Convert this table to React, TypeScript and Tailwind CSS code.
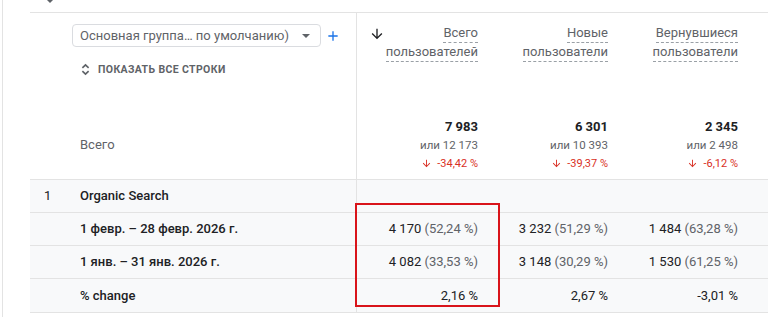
import type { JSX } from "react";

type Metric = { top: string; bottom: string; total: string; prev: string; change: string };

const metrics: Metric[] = [
  { top: "Всего", bottom: "пользователей", total: "7 983", prev: "или 12 173", change: "-34,42 %" },
  { top: "Новые", bottom: "пользователи", total: "6 301", prev: "или 10 393", change: "-39,37 %" },
  { top: "Вернувшиеся", bottom: "пользователи", total: "2 345", prev: "или 2 498", change: "-6,12 %" },
];

type Row = { num?: string; label: string; cells: { value: string; share?: string }[] };

const rows: Row[] = [
  { num: "1", label: "Organic Search", cells: [] },
  {
    label: "1 февр. – 28 февр. 2026 г.",
    cells: [
      { value: "4 170", share: "(52,24 %)" },
      { value: "3 232", share: "(51,29 %)" },
      { value: "1 484", share: "(63,28 %)" },
    ],
  },
  {
    label: "1 янв. – 31 янв. 2026 г.",
    cells: [
      { value: "4 082", share: "(33,53 %)" },
      { value: "3 148", share: "(30,29 %)" },
      { value: "1 530", share: "(61,25 %)" },
    ],
  },
  { label: "% change", cells: [{ value: "2,16 %" }, { value: "2,67 %" }, { value: "-3,01 %" }] },
];

const colClass = ["w-[131px]", "w-[130px]", "w-[130px]"];

const DownArrow = ({ className }: { className: string }): JSX.Element => (
  <svg viewBox="0 0 24 24" className={className} fill="currentColor" aria-hidden>
    <path d="M20 12l-1.41-1.41L13 16.17V4h-2v12.17l-5.58-5.59L4 12l8 8 8-8z" />
  </svg>
);

const ExpandIcon = (): JSX.Element => (
  <svg viewBox="0 0 24 24" className="h-[15px] w-[15px] text-[#5f6368]" fill="none" stroke="currentColor" strokeWidth="2.6" aria-hidden>
    <path d="M7 9.5l5-5 5 5M7 14.5l5 5 5-5" />
  </svg>
);

export default function App(): JSX.Element {
  return (
    <div
      className="relative h-[317px] w-[768px] overflow-hidden bg-white pl-[2px] text-[#202124]"
      style={{ fontFamily: "Roboto, 'Noto Sans', sans-serif" }}
    >
      <div className="h-full border-l border-[#e3e3e3] pl-[27px]">
        {/* cut-off icon above the table */}
        <div className="relative h-[12px]">
          <svg viewBox="0 0 8 4" className="absolute left-[17px] top-0 h-[3px] w-[6px] text-[#5f6368]" fill="currentColor" aria-hidden>
            <path d="M0 0h8L4 4z" />
          </svg>
        </div>

        <div className="border-t border-[#e3e3e3]">
          {/* header block */}
          <div className="flex h-[167px] border-b border-[#e3e3e3]">
            <div className="flex w-[327px] shrink-0 flex-col border-r border-[#e3e3e3] pl-[42px] pt-[11px]">
              <div className="flex items-center">
                <div className="flex h-[23px] w-[249px] items-center rounded-[4px] border border-[#dadce0] pl-[7px] pr-[10px] text-[13px] text-[#5f6368]">
                  <span className="flex-1 whitespace-nowrap">Основная группа… по умолчанию)</span>
                  <svg viewBox="0 0 10 5" className="h-[4px] w-[8px]" fill="#5f6368" aria-hidden>
                    <path d="M0 0h10L5 5z" />
                  </svg>
                </div>
                <svg viewBox="0 0 24 24" className="ml-[4px] h-[16px] w-[16px]" fill="#1a73e8" aria-hidden>
                  <path d="M19 13h-6v6h-2v-6H5v-2h6V5h2v6h6v2z" />
                </svg>
              </div>
              <div className="mt-[15px] flex items-center gap-[5px] pl-[6px] text-[10.5px] font-bold tracking-[0.035em] text-[#5f6368]">
                <ExpandIcon />
                <span>ПОКАЗАТЬ ВСЕ СТРОКИ</span>
              </div>
              <div className="mt-[57px] pl-[8px] text-[13px] text-[#5f6368]">Всего</div>
            </div>

            {metrics.map((m, i) => (
              <div key={m.top} className={`relative flex shrink-0 flex-col items-end pr-[10px] ${colClass[i]}`}>
                {i === 0 && <DownArrow className="absolute left-[12px] top-[13px] h-[16px] w-[16px] text-[#202124]" />}
                <div className="flex flex-col items-end pt-[11px] text-[13px] leading-[18px] text-[#5f6368]">
                  <span className="border-b border-dashed border-[#9aa0a6]">{m.top}</span>
                  <span className="border-b border-dashed border-[#9aa0a6]">{m.bottom}</span>
                </div>
                <div className="mt-auto flex flex-col items-end pb-[7px]">
                  <span className="text-[13px] font-bold leading-[19px] text-[#202124]">{m.total}</span>
                  <span className="text-[11.5px] leading-[19px] text-[#5f6368]">{m.prev}</span>
                  <span className="flex items-center gap-[5px] text-[11px] leading-[17px] text-[#d93025]">
                    <DownArrow className="h-[11px] w-[11px]" />
                    {m.change}
                  </span>
                </div>
              </div>
            ))}
          </div>

          {/* data rows */}
          {rows.map((r, idx) => (
            <div
              key={r.label}
              className={`flex border-b border-[#e3e3e3] bg-[#f8f9fa] ${idx === rows.length - 1 ? "h-[34px]" : "h-[33px]"}`}
            >
              <div className="flex w-[327px] shrink-0 items-center border-r border-[#e3e3e3] text-[13px] font-medium">
                <span className="w-[50px] pl-[14px] font-normal">{r.num}</span>
                <span>{r.label}</span>
              </div>
              {metrics.map((m, i) => {
                const c = r.cells[i];
                return (
                  <div key={m.top} className={`flex shrink-0 items-center justify-end pr-[10px] text-[13px] ${colClass[i]}`}>
                    {c && (
                      <span>
                        {c.value}
                        {c.share && <span className="text-[#5f6368]"> {c.share}</span>}
                      </span>
                    )}
                  </div>
                );
              })}
            </div>
          ))}
        </div>
      </div>

      {/* highlight box */}
      <div className="pointer-events-none absolute left-[355px] top-[203px] h-[104px] w-[145px] border-2 border-[#d9141a]" />
    </div>
  );
}
